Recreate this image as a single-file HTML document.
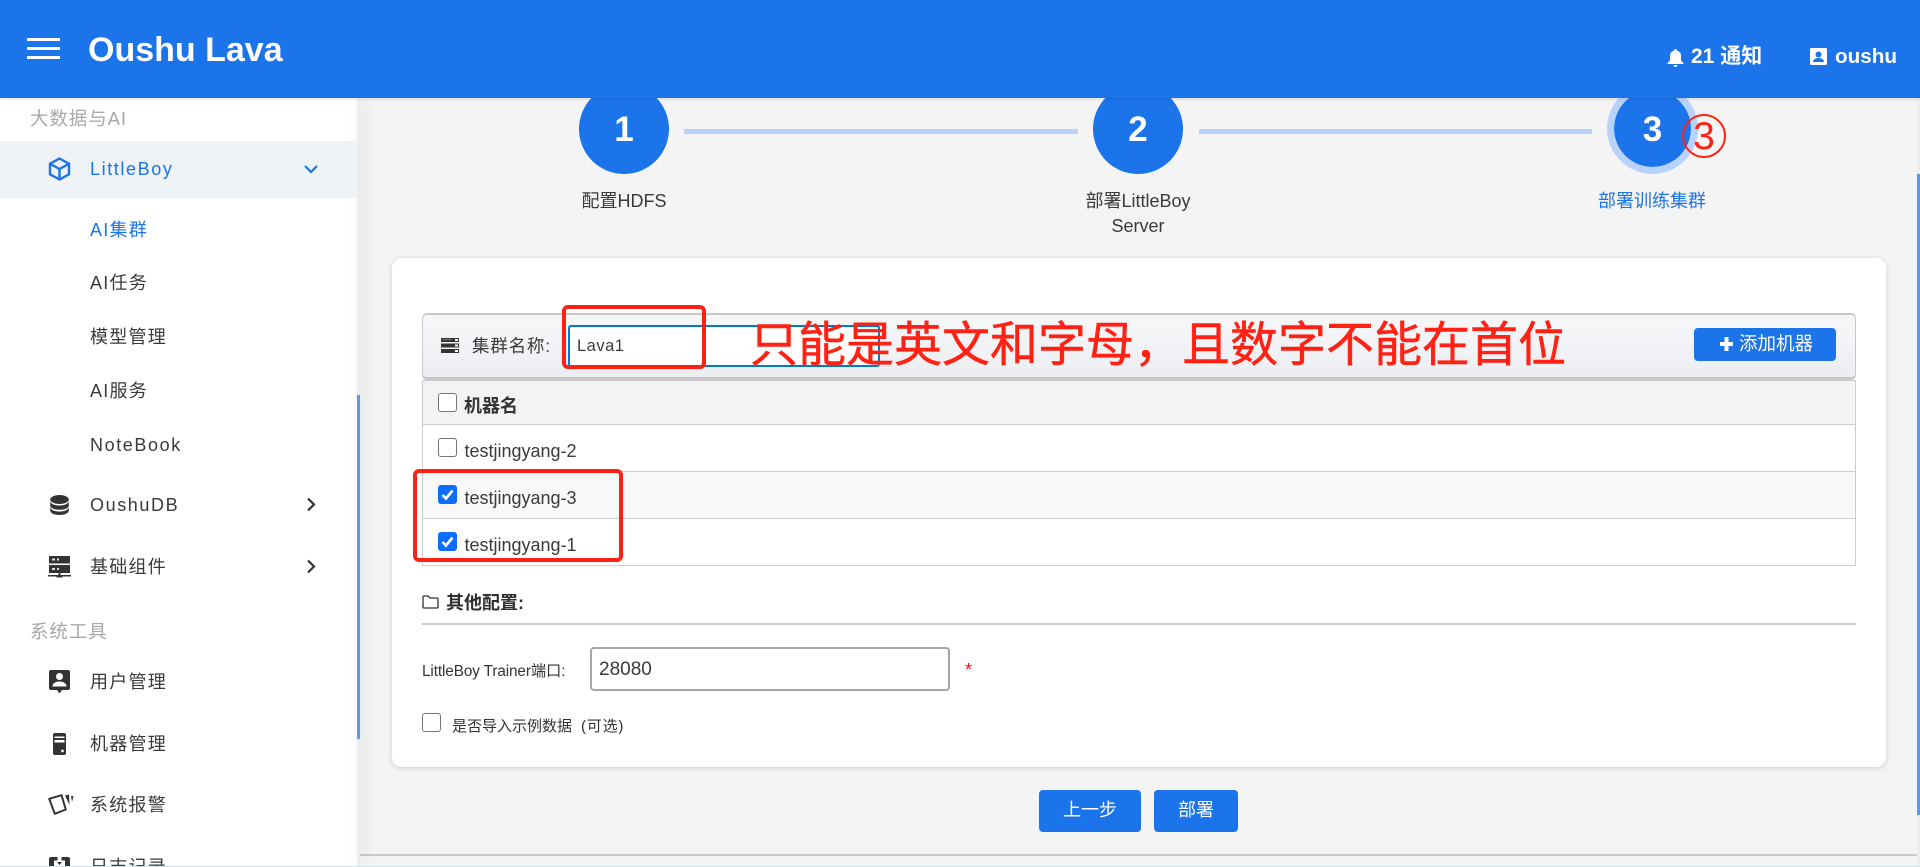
<!DOCTYPE html>
<html lang="zh">
<head>
<meta charset="utf-8">
<title>Oushu Lava</title>
<style>
html,body{margin:0;padding:0;width:1920px;height:867px;overflow:hidden;background:#f4f4f4;}
body{position:relative;font-family:"Liberation Sans","Noto Sans CJK SC",sans-serif;color:#333;}
.a{position:absolute;white-space:nowrap;}
.t{position:absolute;white-space:nowrap;line-height:30px;height:30px;}
.nav{font-size:18px;letter-spacing:1.25px;color:#3a3a3a;left:90px;}
.lat{letter-spacing:1.6px;}
.sec{font-size:18.5px;letter-spacing:.9px;color:#a8a8a8;left:30px;}
.circle{position:absolute;border-radius:50%;background:#1b74ea;color:#fff;text-align:center;font-weight:bold;font-size:35px;}
.line{position:absolute;height:5px;top:129px;background:#b8d2fb;}
.lbl{position:absolute;text-align:center;font-size:18px;line-height:25px;color:#3a3a3a;white-space:nowrap;}
.row{position:absolute;left:422px;width:1434px;box-sizing:border-box;border:1px solid #ccc;border-top:0;border-bottom:1px solid #ccc;}
.cb{position:absolute;width:19px;height:19px;box-sizing:border-box;border:1.5px solid #767676;border-radius:3px;background:#fff;}
.ck{position:absolute;width:19px;height:19px;border-radius:3px;background:#0d6efd;}
.rect{position:absolute;box-sizing:border-box;border:4.5px solid #ff2214;border-radius:6px;}
.btn{position:absolute;background:#1b74ea;border-radius:4px;color:#fff;text-align:center;font-size:18px;}
svg{position:absolute;display:block;}
</style>
</head>
<body>

<!-- main area -->
<div class="a" style="left:360px;top:854px;width:1557px;height:2px;background:#c9c9c9;"></div>
<div class="a" style="left:1917px;top:98px;width:3px;height:769px;background:#eeeeee;"></div>
<div class="a" style="left:1917px;top:174px;width:3px;height:641px;background:#5b97f5;"></div>

<!-- stepper -->
<div class="circle" style="left:579px;top:84px;width:90px;height:90px;line-height:92px;">1</div>
<div class="circle" style="left:1093px;top:84px;width:90px;height:90px;line-height:92px;">2</div>
<div class="circle" style="left:1607px;top:83px;width:77px;height:77px;line-height:79px;border:7px solid #b8d2fb;background-clip:padding-box;">3</div>
<div class="line" style="left:684px;width:394px;"></div>
<div class="line" style="left:1199px;width:393px;"></div>
<div class="lbl" style="left:524px;width:200px;top:189px;">配置HDFS</div>
<div class="lbl" style="left:1038px;width:200px;top:189px;">部署LittleBoy<br>Server</div>
<div class="lbl" style="left:1552px;width:200px;top:189px;color:#1b74ea;">部署训练集群</div>

<!-- card -->
<div class="a" style="left:392px;top:258px;width:1494px;height:509px;background:#fff;border-radius:10px;box-shadow:0 1px 6px rgba(0,0,0,.16);"></div>

<!-- toolbar -->
<div class="a" style="left:422px;top:313px;width:1434px;height:67px;box-sizing:border-box;border:2px solid #c8c8c8;border-width:2px 1px 3px 1px;border-radius:5px;background:linear-gradient(#f6f7f9,#eceef2);"></div>
<svg style="left:441px;top:338px;" width="18" height="15" viewBox="0 0 18 15"><g fill="#333"><rect x="0" y="0" width="18" height="4"/><rect x="0" y="5.5" width="18" height="4"/><rect x="0" y="11" width="18" height="4"/></g><g fill="#fff"><rect x="14" y="1" width="3" height="2"/><rect x="14" y="6.5" width="3" height="2"/><rect x="14" y="12" width="3" height="2"/><rect x="1.5" y="1" width="9" height=".7" opacity=".5"/></g></svg>
<div class="t" style="left:472px;top:331px;font-size:17.5px;letter-spacing:.8px;color:#3a3a3a;">集群名称:</div>
<div class="a" style="left:568px;top:325px;width:312px;height:42px;box-sizing:border-box;border:2px solid #0078d4;border-radius:3px;background:#fff;"></div>
<div class="t" style="left:577px;top:331px;font-size:16.5px;letter-spacing:.5px;color:#3a3a3a;">Lava1</div>
<div class="btn" style="left:1694px;top:328px;width:142px;height:33px;"></div>
<svg style="left:1720px;top:337px;" width="13" height="14" viewBox="0 0 13 14"><path d="M4.500 0h4v5h4.500v4H8.500v5h-4V9H0V5h4.500z" fill="#fff"/></svg>
<div class="t" style="left:1739px;top:329px;font-size:18.500px;color:#fff;">添加机器</div>

<!-- table -->
<div class="row" style="top:380px;height:45px;background:#f3f3f3;border-top:1px solid #ccc;"></div>
<div class="row" style="top:425px;height:47px;background:#fff;"></div>
<div class="row" style="top:472px;height:47px;background:#f8f8f8;"></div>
<div class="row" style="top:519px;height:47px;background:#fff;"></div>

<div class="cb" style="left:438px;top:393px;"></div>
<div class="t" style="left:464px;top:391px;font-size:18px;font-weight:bold;color:#333;">机器名</div>
<div class="cb" style="left:438px;top:438px;"></div>
<div class="t" style="left:464.500px;top:436px;font-size:18px;color:#3a3a3a;">testjingyang-2</div>
<div class="ck" style="left:438px;top:485px;"></div>
<svg style="left:438px;top:485px;" width="19" height="19" viewBox="0 0 19 19"><path d="M4.500 10l3.500 3.500 6.500-8" fill="none" stroke="#fff" stroke-width="2.600"/></svg>
<div class="t" style="left:464.500px;top:483px;font-size:18px;color:#3a3a3a;">testjingyang-3</div>
<div class="ck" style="left:438px;top:532px;"></div>
<svg style="left:438px;top:532px;" width="19" height="19" viewBox="0 0 19 19"><path d="M4.500 10l3.500 3.500 6.500-8" fill="none" stroke="#fff" stroke-width="2.600"/></svg>
<div class="t" style="left:464.500px;top:530px;font-size:18px;color:#3a3a3a;">testjingyang-1</div>

<!-- other config -->
<svg style="left:422px;top:595px;" width="17" height="14" viewBox="0 0 17 14"><path d="M1 3V2q0-1 1-1h4l2 2h7q1 0 1 1v8q0 1-1 1H2q-1 0-1-1z" fill="none" stroke="#333" stroke-width="1.300"/></svg>
<div class="t" style="left:446px;top:588px;font-size:18px;font-weight:bold;color:#2f2f2f;">其他配置:</div>
<div class="a" style="left:422px;top:623px;width:1434px;height:2px;background:#cccccc;"></div>
<div class="t" style="left:422px;top:657px;font-size:15.300px;letter-spacing:-.1px;color:#333;">LittleBoy Trainer端口:</div>
<div class="a" style="left:590px;top:647px;width:360px;height:44px;box-sizing:border-box;border:2px solid #a6a6a6;border-radius:4px;background:#fff;"></div>
<div class="t" style="left:599px;top:655px;font-size:19px;color:#3a3a3a;">28080</div>
<div class="t" style="left:965px;top:655px;font-size:18px;color:#ee1111;">*</div>
<div class="cb" style="left:422px;top:713px;"></div>
<div class="t" style="left:452px;top:712px;font-size:15px;color:#333;">是否导入示例数据<span style="margin-left:9px;letter-spacing:.8px;">(可选)</span></div>

<!-- buttons -->
<div class="btn" style="left:1039px;top:790px;width:102px;height:42px;line-height:40px;">上一步</div>
<div class="btn" style="left:1154px;top:790px;width:84px;height:42px;line-height:40px;">部署</div>

<!-- sidebar -->
<div class="a" style="left:0;top:98px;width:357px;height:769px;background:#fff;"></div>
<div class="a" style="left:357px;top:98px;width:3px;height:769px;background:#ececec;box-shadow:3px 0 12px rgba(0,0,0,.13);"></div>
<div class="a" style="left:357px;top:395px;width:3px;height:344px;background:#5b97f5;"></div>
<div class="a" style="left:0;top:141px;width:357px;height:57px;background:#eff2f6;"></div>

<div class="t sec" style="top:104px;">大数据与AI</div>

<svg style="left:48px;top:157px;" width="23" height="24" viewBox="0 0 23 24"><path d="M11.500 1.500l9.500 5.200v10.600l-9.500 5.200-9.500-5.200V6.700zM2.500 7l9 5 9-5M11.500 12v10.500" fill="none" stroke="#1b74ea" stroke-width="2.400"/></svg>
<div class="t nav lat" style="top:154px;color:#1b74ea;">LittleBoy</div>
<svg style="left:303px;top:164px;" width="16" height="11" viewBox="0 0 16 11"><path d="M2 2l6 6 6-6" fill="none" stroke="#1b74ea" stroke-width="2.200"/></svg>

<div class="t nav" style="top:215px;color:#1b74ea;">AI集群</div>
<div class="t nav" style="top:268px;">AI任务</div>
<div class="t nav" style="top:322px;">模型管理</div>
<div class="t nav" style="top:376px;">AI服务</div>
<div class="t nav lat" style="top:430px;">NoteBook</div>

<svg style="left:50px;top:495px;" width="19" height="20" viewBox="0 0 19 20"><ellipse cx="9.500" cy="4.500" rx="9.300" ry="4.500" fill="#333"/><path d="M.2 6.500c1 2.500 4.500 4 9.300 4s8.300-1.500 9.300-4v4c0 2.500-4 4.300-9.300 4.300S.2 13 .2 10.500z" fill="#333"/><path d="M.2 12.500c1 2.500 4.500 4 9.300 4s8.300-1.500 9.300-4v3c0 2.500-4 4.500-9.300 4.500S.2 18 .2 15.500z" fill="#333"/></svg>
<div class="t nav lat" style="top:490px;">OushuDB</div>
<svg style="left:306px;top:497px;" width="11" height="15" viewBox="0 0 11 15"><path d="M2 1.500l6 6-6 6" fill="none" stroke="#333" stroke-width="2.200"/></svg>

<svg style="left:48px;top:555px;" width="23" height="23" viewBox="0 0 23 23"><path d="M1 1h21v7.500H1zM1 10h21v8H1z" fill="#333"/><path d="M4 3.500h3v2H4zM9 3.500h2v2H9zM4 13h3v2H4zM9 13h2v2H9z" fill="#ddd"/><path d="M10.500 18h2v2h-2zM0 20h23v1.500H0z" fill="#333"/><path d="M8.500 20h6v2.500h-6z" fill="#333"/></svg>
<div class="t nav" style="top:552px;">基础组件</div>
<svg style="left:306px;top:559px;" width="11" height="15" viewBox="0 0 11 15"><path d="M2 1.500l6 6-6 6" fill="none" stroke="#333" stroke-width="2.200"/></svg>

<div class="t sec" style="top:617px;">系统工具</div>

<svg style="left:49px;top:670px;" width="21" height="24" viewBox="0 0 21 24"><path d="M2 0h17q2 0 2 2v16q0 2-2 2h-6l-2.500 3.500L8 20H2q-2 0-2-2V2q0-2 2-2z" fill="#333"/><circle cx="10.500" cy="6.500" r="3.500" fill="#fff"/><path d="M3.500 16.500c0-3.500 3.500-5 7-5s7 1.500 7 5z" fill="#fff"/></svg>
<div class="t nav" style="top:667px;">用户管理</div>

<svg style="left:53px;top:733px;" width="13" height="22" viewBox="0 0 13 22"><path d="M2 0h9q2 0 2 2v18q0 2-2 2H2q-2 0-2-2V2q0-2 2-2z" fill="#333"/><path d="M1.500 3.500h10v1.500h-10zM1.500 7h10v2.500h-10z" fill="#fff"/><circle cx="9.500" cy="18" r="1.400" fill="#fff"/></svg>
<div class="t nav" style="top:729px;">机器管理</div>

<svg style="left:47px;top:794px;" width="27" height="22" viewBox="0 0 27 22"><path d="M2.200 4.800L14.500 1.200 18.800 15.500 7.800 19.800z" fill="none" stroke="#333" stroke-width="2" stroke-linejoin="round"/><path d="M18 1.500L22 .5 22.500 11zM24 2l2.500 0-1.500 6z" fill="#333"/></svg>
<div class="t nav" style="top:790px;">系统报警</div>

<svg style="left:49px;top:857px;" width="21" height="10" viewBox="0 0 21 10"><path d="M2 0h6.500v3.500H5L5 10H0V2q0-2 2-2zM12.500 0H19q2 0 2 2v8h-5V3.500h-3.500zM8 5l2.500 3L13 5z" fill="#333"/></svg>
<div class="t nav" style="top:852px;">日志记录</div>

<!-- header -->
<div class="a" style="left:0;top:0;width:1920px;height:98px;background:#1b74ea;box-shadow:0 1px 3px rgba(0,0,0,.12);"></div>
<div class="a" style="left:27px;top:38px;width:33px;height:3px;background:#fff;"></div>
<div class="a" style="left:27px;top:47px;width:33px;height:3px;background:#fff;"></div>
<div class="a" style="left:27px;top:56px;width:33px;height:3px;background:#fff;"></div>
<div class="a" style="left:88px;top:30px;font-size:34px;line-height:40px;font-weight:bold;color:#fff;">Oushu Lava</div>
<svg style="left:1667px;top:49px;" width="17" height="18" viewBox="0 0 17 18"><path d="M8.500 0q1.300 0 1.300 1.500Q14 2.500 14 7v4.500l2.500 2.500v1H.5v-1L3 11.500V7q0-4.500 4.200-5.500Q7.200 0 8.500 0zM6.500 16h4q-.3 2-2 2t-2-2z" fill="#fff"/></svg>
<div class="a" style="left:1691px;top:43px;font-size:21px;line-height:28px;font-weight:bold;color:#fff;">21 通知</div>
<svg style="left:1810px;top:48px;" width="17" height="17" viewBox="0 0 17 17"><path d="M1.500 0h14Q17 0 17 1.500v14q0 1.500-1.500 1.500h-14Q0 17 0 15.500v-14Q0 0 1.500 0z" fill="#fff"/><circle cx="8.500" cy="6.500" r="3" fill="#1b74ea"/><path d="M3 14c0-3 3-4 5.500-4S14 11 14 14z" fill="#1b74ea"/></svg>
<div class="a" style="left:1835px;top:43px;font-size:20.700px;line-height:28px;font-weight:bold;color:#fff;">oushu</div>

<!-- annotations -->
<div class="rect" style="left:562px;top:305px;width:144px;height:64px;"></div>
<div class="rect" style="left:413px;top:469px;width:210px;height:93px;"></div>
<div class="a" style="left:750px;top:312px;font-size:48px;line-height:68px;color:#ff2214;-webkit-text-stroke:.5px #ff2214;">只能是英文和字母，且数字不能在首位</div>
<div class="a" style="left:1682px;top:114px;width:44px;height:44px;box-sizing:border-box;border:2px solid #ff2214;border-radius:50%;text-align:center;color:#ff2214;font-size:39px;line-height:41px;">3</div>

<div class="a" style="left:0;top:866px;width:1920px;height:1px;background:#cfe3ea;"></div>
</body>
</html>
